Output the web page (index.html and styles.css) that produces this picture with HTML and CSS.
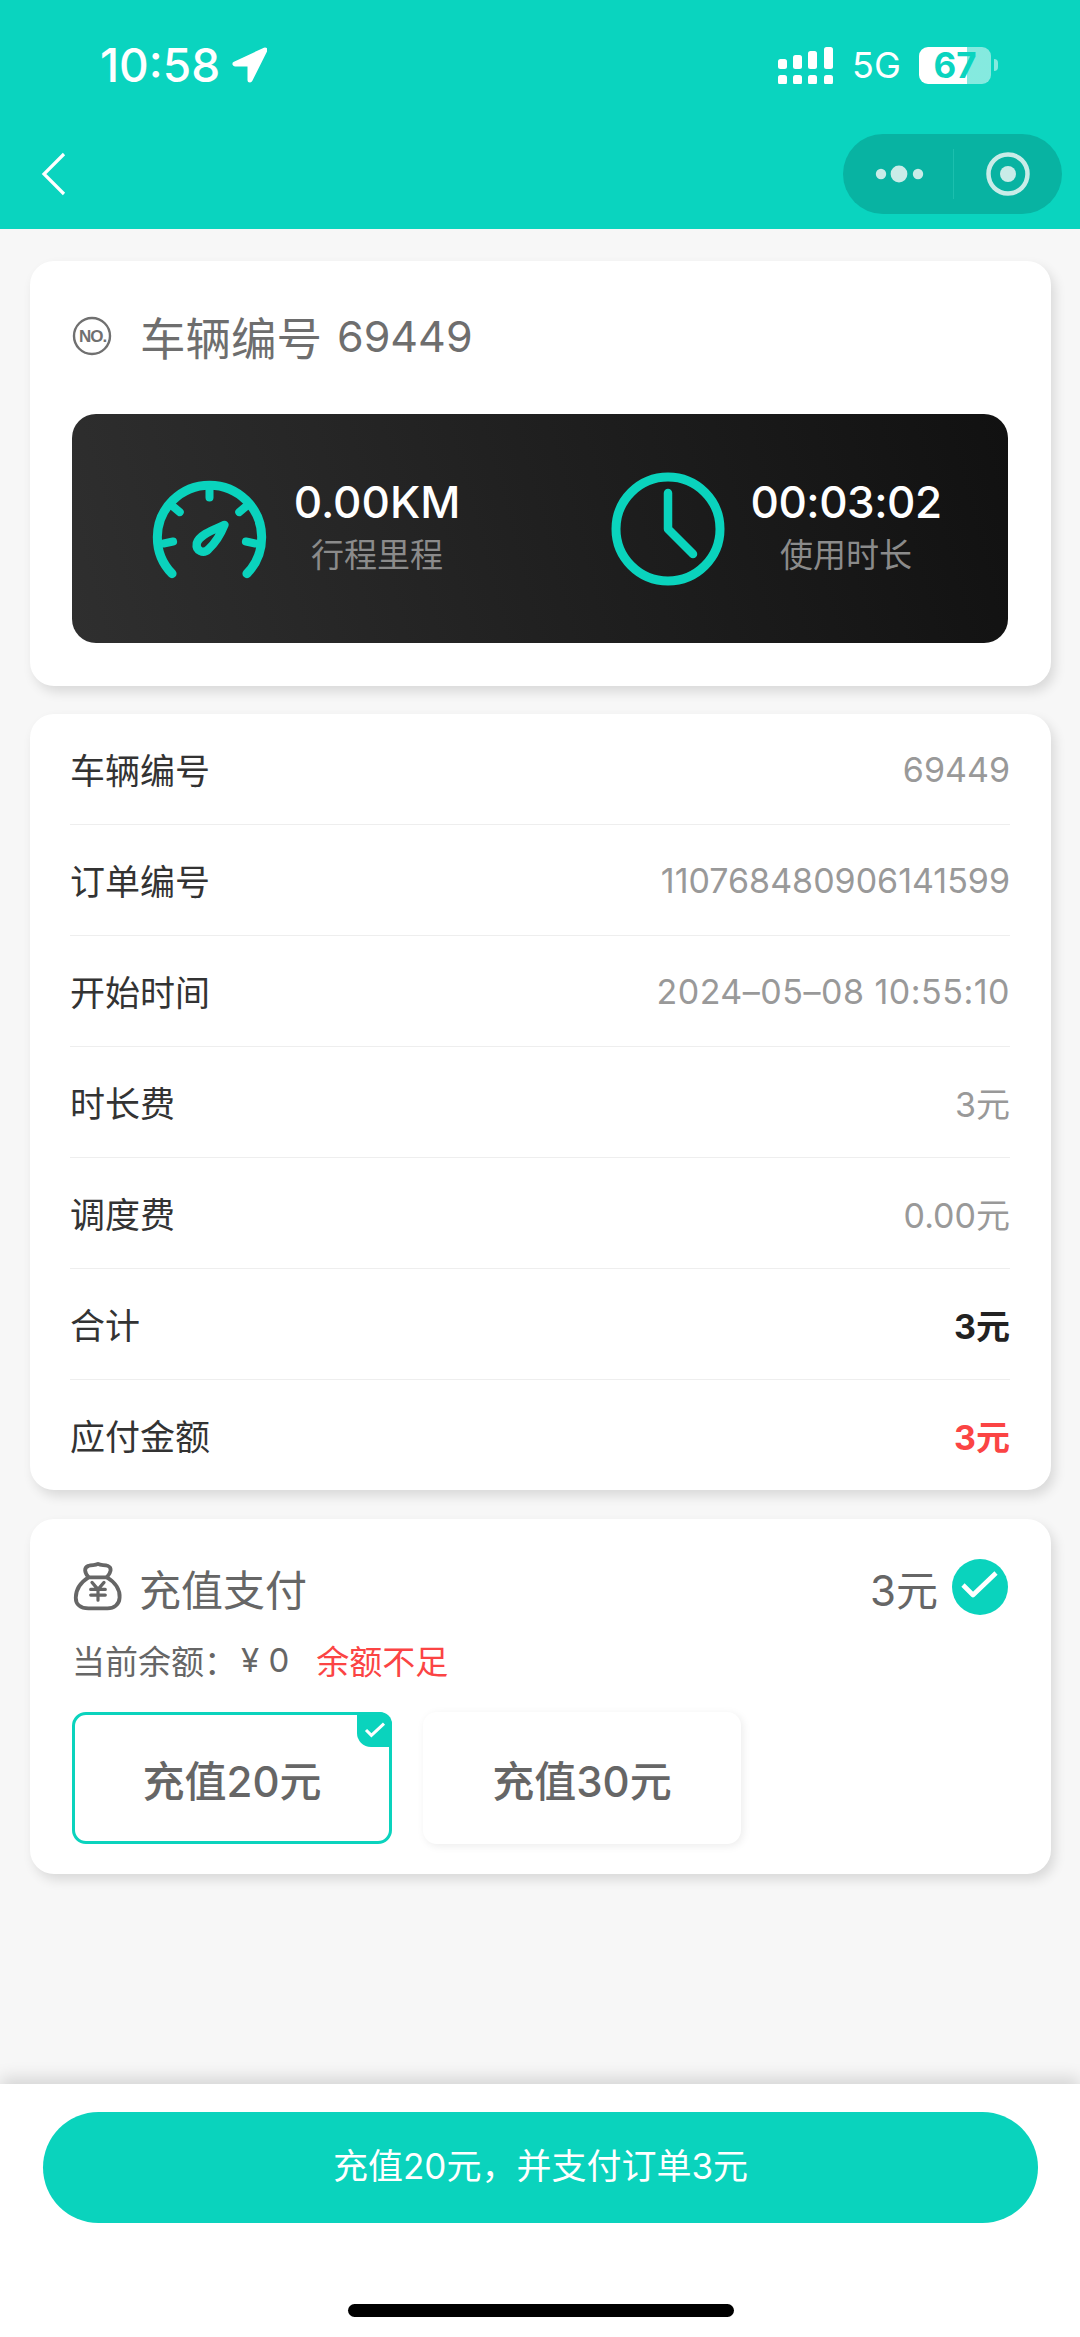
FILE: index.html
```html
<!DOCTYPE html>
<html lang="zh-CN">
<head>
    <meta charset="UTF-8">
    <meta name="viewport" content="width=device-width, initial-scale=1.0">
    <title>订单结算</title>
    <link rel="stylesheet" href="styles.css">
</head>
<body>
    <div class="header">
        <div class="status-bar">
            <span class="time">10:58</span>
            <svg class="location" viewBox="0 0 35 36"><path d="M33 3 3 17h15v16z" fill="#fff" stroke="#fff" stroke-width="5" stroke-linejoin="round"/></svg>
            <div class="status-right">
                <svg class="signal" viewBox="0 0 55 37" fill="#fff">
                    <rect x="0" y="12" width="9" height="10" rx="2.5"/><rect x="15" y="8" width="9" height="14" rx="2.5"/><rect x="30" y="4" width="9" height="18" rx="2.5"/><rect x="46" y="0" width="9" height="22" rx="2.5"/>
                    <rect x="0" y="28" width="9" height="9.5" rx="2.5"/><rect x="15" y="28" width="9" height="9.5" rx="2.5"/><rect x="30" y="28" width="9" height="9.5" rx="2.5"/><rect x="46" y="28" width="9" height="9.5" rx="2.5"/>
                </svg>
                <span class="network">5G</span>
                <div class="battery">67</div>
                <div class="battery-nub"></div>
            </div>
        </div>
        <div class="nav-bar">
            <svg class="back" viewBox="0 0 26 46"><path d="M23 3 3 23l20 20" fill="none" stroke="#fff" stroke-width="3.2"/></svg>
            <div class="capsule">
                <svg class="capsule-more" viewBox="0 0 50 20" fill="#c9ece8"><circle cx="6" cy="10" r="5.2"/><circle cx="24" cy="10" r="8.4"/><circle cx="43" cy="10" r="5.2"/></svg>
                <div class="capsule-line"></div>
                <svg class="capsule-target" viewBox="0 0 46 46"><circle cx="23" cy="23" r="19.5" fill="none" stroke="#c9ece8" stroke-width="4.5"/><circle cx="23" cy="23" r="8" fill="#c9ece8"/></svg>
            </div>
        </div>
    </div>

    <div class="content">
        <div class="card card-vehicle">
            <div class="vehicle-title">
                <svg class="icon-no" viewBox="0 0 40 40"><circle cx="20" cy="20" r="18" fill="none" stroke="#707070" stroke-width="2.4"/><text x="20.5" y="26" text-anchor="middle" class="icon-no-text">NO.</text></svg>
                <span>车辆编号</span>
                <span class="vehicle-no">69449</span>
            </div>
            <div class="stats">
                <div class="stat">
                    <svg class="icon-gauge" viewBox="390 590 350 305" fill="none" stroke="#0ad3bd" stroke-width="27" stroke-linecap="round" stroke-linejoin="round">
                        <path d="M453 876A156 156 0 1 1 677 876"/>
                        <path d="M565 625V648M452 672 476 692M678 672 654 692M428 786 456 780M702 786 674 780" stroke-width="24"/>
                        <path d="M610 730C585 742 535 758 527 785 523 808 547 818 562 803 585 782 600 755 610 730Z" stroke-width="25"/>
                    </svg>
                    <div class="stat-text">
                        <div class="stat-value">0.00KM</div>
                        <div class="stat-label">行程里程</div>
                    </div>
                </div>
                <div class="stat">
                    <svg class="icon-clock" viewBox="0 0 114 118" fill="none" stroke="#0ad3bd" stroke-linecap="round" stroke-linejoin="round">
                        <circle cx="57" cy="59" r="52" stroke-width="9"/>
                        <path d="M57 23V59L82 84" stroke-width="8.5"/>
                    </svg>
                    <div class="stat-text">
                        <div class="stat-value stat-time">00:03:02</div>
                        <div class="stat-label">使用时长</div>
                    </div>
                </div>
            </div>
        </div>

        <div class="card card-detail">
            <div class="row"><span class="row-label">车辆编号</span><span class="row-value">69449</span></div>
            <div class="row"><span class="row-label">订单编号</span><span class="row-value">110768480906141599</span></div>
            <div class="row"><span class="row-label">开始时间</span><span class="row-value row-date">2024–05–08 10:55:10</span></div>
            <div class="row"><span class="row-label">时长费</span><span class="row-value">3元</span></div>
            <div class="row"><span class="row-label">调度费</span><span class="row-value">0.00元</span></div>
            <div class="row"><span class="row-label">合计</span><span class="row-value total">3元</span></div>
            <div class="row"><span class="row-label">应付金额</span><span class="row-value payable">3元</span></div>
        </div>

        <div class="card card-pay">
            <div class="pay-head">
                <svg class="icon-bag" viewBox="150 180 170 165" fill="none" stroke="#666" stroke-width="12" stroke-linecap="round" stroke-linejoin="round">
                    <path d="M205 232C192 216 190 202 205 196 216 191 225 196 235 190 245 196 255 191 266 196 280 202 276 216 263 232 290 248 305 272 303 296 302 318 285 330 265 330H205C180 330 165 318 165 296 165 272 180 248 205 232Z"/>
                    <path d="M205 232H263"/>
                    <path d="M216 248 235 270 254 248M212 270H258M212 288H258M235 270V304" stroke-width="10"/>
                </svg>
                <span class="pay-title">充值支付</span>
                <span class="pay-amount">3元</span>
                <svg class="icon-check" viewBox="0 0 56 56"><circle cx="28" cy="28" r="28" fill="#0ad3bd"/><path d="M11 26 21 36 44 14" fill="none" stroke="#fff" stroke-width="4.6" stroke-linejoin="round"/></svg>
            </div>
            <div class="balance">
                <span>当前余额：</span>
                <span class="balance-num">¥ 0</span>
                <span class="balance-low">余额不足</span>
            </div>
            <div class="options">
                <div class="option selected">
                    充值20元
                    <div class="option-badge">
                        <svg viewBox="0 0 24 20"><path d="M2 10 8 16 22 3" fill="none" stroke="#fff" stroke-width="3.4"/></svg>
                    </div>
                </div>
                <div class="option">充值30元</div>
            </div>
        </div>
    </div>

    <div class="footer">
        <div class="pay-btn">充值20元，并支付订单3元</div>
        <div class="home-bar"></div>
    </div>
</body>
</html>
```

FILE: styles.css
```css
* {
  box-sizing: border-box;
}

html, body {
  margin: 0;
  height: 100%;
}

body {
  width: 1080px;
  height: 2337px;
  overflow: hidden;
  display: flex;
  flex-direction: column;
  background-color: #f7f7f7;
  color: #333;
  font-family: Inter, "Noto Sans CJK SC", sans-serif;
}

/* Header styles */
.header {
  height: 229px;
  background-color: #0ad4bf;
  color: #fff;
}

.status-bar {
  height: 130px;
  display: flex;
  align-items: center;
  padding: 0 82px 0 100px;
}

.time {
  font-size: 46px;
  font-weight: 500;
}

.location {
  width: 35px;
  height: 36px;
  margin-left: 12px;
}

.status-right {
  margin-left: auto;
  display: flex;
  align-items: center;
}

.signal {
  width: 55px;
  height: 37px;
}

.network {
  font-size: 36px;
  margin-left: 19px;
  width: 48px;
}

.battery {
  width: 72px;
  height: 37px;
  margin-left: 19px;
  border-radius: 9px;
  background: linear-gradient(to right, #fff 48px, rgba(255, 255, 255, 0.5) 48px);
  color: #0ad4bf;
  font-size: 35px;
  font-weight: 700;
  line-height: 37px;
  text-align: center;
}

.battery-nub {
  width: 4px;
  height: 12px;
  margin-left: 3px;
  border-radius: 0 6px 6px 0;
  background-color: rgba(255, 255, 255, 0.5);
}

.nav-bar {
  height: 99px;
  display: flex;
  justify-content: space-between;
  align-items: flex-start;
  padding: 4px 18px 0 41px;
}

.back {
  width: 26px;
  height: 46px;
  margin-top: 17px;
}

.capsule {
  width: 219px;
  height: 80px;
  display: flex;
  align-items: center;
  border-radius: 40px;
  background-color: #08b3a2;
}

.capsule-more {
  width: 50px;
  height: 20px;
  margin-left: 32px;
}

.capsule-line {
  width: 1px;
  height: 50px;
  margin-left: 28px;
  background-color: #1cbfae;
}

.capsule-target {
  width: 46px;
  height: 46px;
  margin-left: 31px;
}

/* Cards */
.content {
  padding: 32px 29px 0 30px;
}

.card {
  background-color: #fff;
  border-radius: 24px;
  box-shadow: 4px 6px 12px rgba(0, 0, 0, 0.12);
  margin-bottom: 28px;
}

.card-vehicle {
  height: 425px;
  padding: 0 43px 0 42px;
}

.vehicle-title {
  height: 153px;
  display: flex;
  align-items: center;
  padding-bottom: 4px;
  color: #6e6e6e;
  font-size: 45.5px;
}

.vehicle-no {
  margin-left: 15px;
  font-size: 43px;
}

.icon-no {
  width: 40px;
  height: 40px;
  margin-right: 28px;
}

.icon-no-text {
  font-size: 17px;
  font-weight: 700;
  letter-spacing: -1px;
  fill: #707070;
  font-family: "Liberation Sans", sans-serif;
}

.stats {
  height: 229px;
  display: grid;
  grid-template-columns: 1fr 1fr;
  border-radius: 24px;
  background: linear-gradient(75deg, #2f2f2f, #111);
}

.stat {
  display: flex;
  align-items: center;
  justify-content: center;
  gap: 26px;
}

.icon-gauge {
  width: 117px;
  height: 102px;
  margin-left: -1px;
}

.icon-clock {
  width: 114px;
  height: 118px;
  margin-left: 4px;
}

.stat-text {
  text-align: center;
  padding-bottom: 4px;
}

.stat-value {
  color: #fff;
  font-size: 44px;
  font-weight: 500;
  line-height: 56px;
}

.stat-time {
  letter-spacing: -0.5px;
}

.stat-label {
  color: #8b8b8b;
  font-size: 33px;
  line-height: 50px;
}

/* Order detail rows */
.card-detail {
  padding: 0 41px 0 40px;
  margin-bottom: 29px;
}

.row {
  display: flex;
  justify-content: space-between;
  align-items: center;
  height: 111px;
  border-bottom: 1px solid #eee;
  font-size: 35px;
}

.row:last-child {
  height: 110px;
  border-bottom: none;
}

.row-label {
  margin-top: -2px;
}

.row-value {
  color: #999;
  font-size: 34px;
}

.row-date {
  letter-spacing: 0.5px;
}

.total {
  color: #222;
  font-weight: 700;
}

.payable {
  color: #fb4444;
  font-weight: 700;
}

/* Recharge */
.card-pay {
  height: 355px;
  padding: 40px 43px 0 42px;
}

.pay-head {
  display: flex;
  align-items: center;
  height: 56px;
  color: #666;
}

.icon-bag {
  width: 54px;
  height: 54px;
  margin: 0 14px 0 -1px;
}

.pay-title {
  font-size: 42px;
}

.pay-amount {
  margin-left: auto;
  font-size: 42px;
}

.icon-check {
  width: 56px;
  height: 56px;
  margin-left: 14px;
}

.balance {
  display: flex;
  align-items: center;
  margin-top: 22px;
  height: 46px;
  color: #666;
  font-size: 33px;
}

.balance-num {
  margin-left: 4px;
}

.balance-low {
  margin-left: 27px;
  color: #fb4444;
}

.options {
  display: flex;
  gap: 31px;
  margin-top: 29px;
}

.option {
  position: relative;
  width: 318px;
  height: 132px;
  display: flex;
  align-items: center;
  justify-content: center;
  border-radius: 14px;
  color: #666;
  font-size: 42px;
  font-weight: 500;
  box-shadow: 2px 2px 8px rgba(0, 0, 0, 0.08);
}

.option.selected {
  width: 320px;
  border: 3px solid #0ad3bd;
  box-shadow: none;
}

.option-badge {
  position: absolute;
  top: -3px;
  right: -3px;
  width: 35px;
  height: 35px;
  display: flex;
  align-items: center;
  justify-content: center;
  border-radius: 0 12px 0 14px;
  background-color: #0ad3bd;
}

.option-badge svg {
  width: 22px;
  height: 18px;
}

/* Bottom bar */
.footer {
  margin-top: auto;
  height: 253px;
  background-color: #fff;
  box-shadow: 0 -6px 16px rgba(0, 0, 0, 0.14);
  padding-top: 28px;
}

.pay-btn {
  width: 995px;
  height: 111px;
  margin-left: 43px;
  border-radius: 56px;
  background-color: #0ad3bd;
  color: #fff;
  font-size: 35px;
  line-height: 108px;
  text-align: center;
}

.home-bar {
  width: 386px;
  height: 13px;
  margin: 81px 0 0 348px;
  border-radius: 7px;
  background-color: #000;
}
```
